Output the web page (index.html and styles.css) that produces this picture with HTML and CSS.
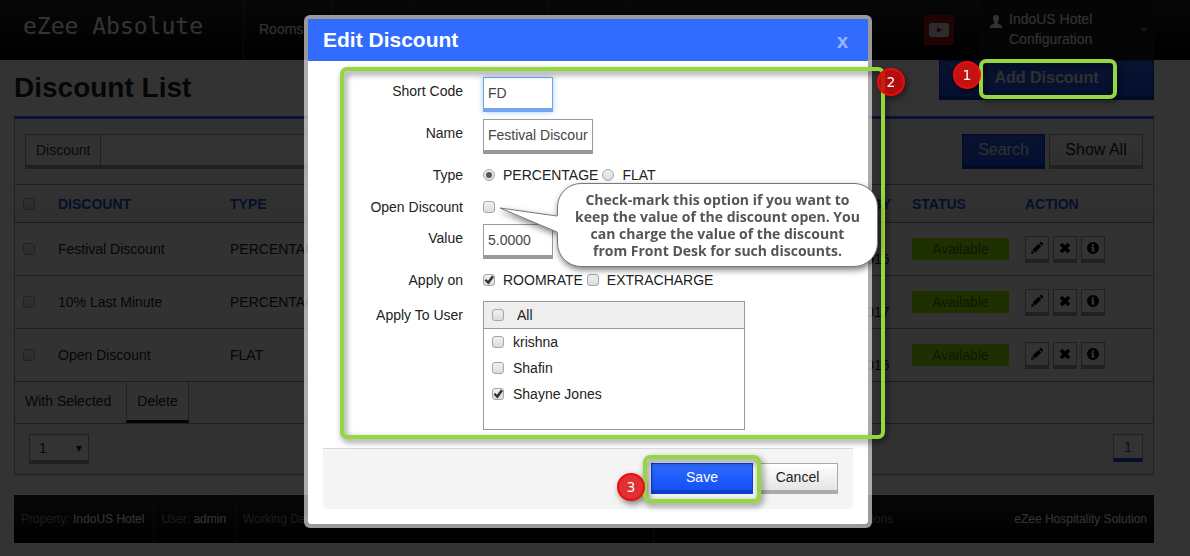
FILE: index.html
```html
<!DOCTYPE html>
<html lang="en">
<head>
<meta charset="utf-8">
<title>Discount List</title>
<link rel="stylesheet" href="styles.css">
</head>
<body>
<svg class="sprite" aria-hidden="true">
  <symbol id="pencil" viewBox="0 0 14 14"><path d="M10.2 1.1q.6-.6 1.2 0l1.500 1.500q.6.6 0 1.200l-1 1-2.700-2.700zM8.500 2.800l2.700 2.700-6 6-2.700-2.700zM1.900 9.600l2.500 2.500L1 13z"/></symbol>
  <symbol id="cross" viewBox="0 0 14 14"><path d="M4.300 1.700 7 4.400l2.700-2.700 2.600 2.600L9.600 7l2.700 2.700-2.600 2.600L7 9.600l-2.700 2.700-2.600-2.600L4.400 7 1.700 4.300z"/></symbol>
  <symbol id="info" viewBox="0 0 14 14"><path fill-rule="evenodd" d="M7 1a6 6 0 1 1 0 12A6 6 0 0 1 7 1zM6 3v1.700h2V3zM5 5.600v1.100h1V9.400H5v1.200h4.100V9.400H8V5.600z"/></symbol>
</svg>

<header class="topbar">
  <div class="logo">eZee Absolute</div>
  <nav class="menu">
    <a class="menu-rooms" href="#">Rooms</a>
    <span class="menu-a"></span><span class="menu-b"></span><span class="menu-a"></span><span class="menu-c"></span>
  </nav>
  <a class="video" href="#" aria-label="Videos">
    <svg width="20" height="14" viewBox="0 0 20 14"><rect width="20" height="14" rx="3" fill="#ddd"/><path d="M8 4l5 3-5 3z" fill="#a01818"/></svg>
  </a>
  <div class="account">
    <svg width="12" height="13" viewBox="0 0 12 13"><path d="M6 0c2 0 3 1.400 3 3.500C9 5 8.500 6 7.600 7v1.500L11 10q1 .5 1 3H0q0-2.500 1-3l3.400-1.500V7C3.500 6 3 5 3 3.500 3 1.400 4 0 6 0z" fill="#fff"/></svg>
    <span class="account-name">IndoUS Hotel Configuration</span>
    <i class="caret"></i>
  </div>
</header>

<main class="page">
  <div class="title-row">
    <h1>Discount List</h1>
    <button class="btn-add" type="button">Add Discount</button>
  </div>

  <section class="panel">
    <div class="search-row">
      <div class="search-group">
        <label for="q">Discount</label>
        <input id="q" type="text">
      </div>
      <button class="btn btn-blue" type="button">Search</button>
      <button class="btn" type="button">Show All</button>
    </div>

    <table class="list">
      <colgroup><col class="c-check"><col class="c-name"><col class="c-type"><col class="c-by"><col class="c-status"><col class="c-action"></colgroup>
      <thead>
        <tr><th><input type="checkbox" aria-label="Select all"></th><th>DISCOUNT</th><th>TYPE</th><th>ADDED BY</th><th>STATUS</th><th>ACTION</th></tr>
      </thead>
      <tbody>
        <tr>
          <td><input type="checkbox" aria-label="Select Festival Discount"></td><td>Festival Discount</td><td>PERCENTAGE</td><td>admin<br>22-08-2016</td>
          <td><span class="status">Available</span></td>
          <td><div class="actions"><button aria-label="Edit"><svg><use href="#pencil"/></svg></button><button aria-label="Remove"><svg><use href="#cross"/></svg></button><button aria-label="Info"><svg><use href="#info"/></svg></button></div></td>
        </tr>
        <tr>
          <td><input type="checkbox" aria-label="Select 10% Last Minute"></td><td>10% Last Minute</td><td>PERCENTAGE</td><td>admin<br>09-02-2017</td>
          <td><span class="status">Available</span></td>
          <td><div class="actions"><button aria-label="Edit"><svg><use href="#pencil"/></svg></button><button aria-label="Remove"><svg><use href="#cross"/></svg></button><button aria-label="Info"><svg><use href="#info"/></svg></button></div></td>
        </tr>
        <tr>
          <td><input type="checkbox" aria-label="Select Open Discount"></td><td>Open Discount</td><td>FLAT</td><td>admin<br>22-08-2016</td>
          <td><span class="status">Available</span></td>
          <td><div class="actions"><button aria-label="Edit"><svg><use href="#pencil"/></svg></button><button aria-label="Remove"><svg><use href="#cross"/></svg></button><button aria-label="Info"><svg><use href="#info"/></svg></button></div></td>
        </tr>
      </tbody>
    </table>

    <div class="bulk"><span>With Selected</span><button type="button">Delete</button></div>
    <div class="pager">
      <div class="select-box"><select aria-label="Rows"><option>1</option></select></div>
      <a href="#">1</a>
    </div>
  </section>

  <footer class="statusbar">
    <span>Property: <b>IndoUS Hotel</b></span>
    <span>User: <b>admin</b></span>
    <span class="grow">Working Date</span>
    <span class="options">Suggestions</span>
    <b class="vendor">eZee Hospitality Solution</b>
  </footer>
</main>

<div class="backdrop">
  <div class="modal" role="dialog" aria-labelledby="dlg">
    <div class="modal-head"><h2 id="dlg">Edit Discount</h2><button type="button" aria-label="Close">x</button></div>
    <form class="form">
      <div class="field"><label for="code">Short Code</label><input class="text focused" id="code" type="text" value="FD"></div>
      <div class="field"><label for="name">Name</label><input class="text wide" id="name" type="text" value="Festival Discount"></div>
      <div class="field field-type"><span class="label">Type</span>
        <div class="choices"><label><input type="radio" name="type" checked>PERCENTAGE</label><label><input type="radio" name="type">FLAT</label></div></div>
      <div class="field field-open"><label for="open">Open Discount</label><div class="choices open-choice"><input id="open" type="checkbox">
        <div class="callout">
          <svg class="tail" width="60" height="28" viewBox="0 0 60 28"><path d="M60 9 1 1l59 25z" fill="#fff"/><path d="M58 9 1 1l57 24" fill="none" stroke="#777"/></svg>
          Check-mark this option if you want to<br>keep the value of the discount open. You<br>can charge the value of the discount<br>from Front Desk for such discounts.
        </div></div></div>
      <div class="field"><label for="value">Value</label><input class="text" id="value" type="text" value="5.0000"></div>
      <div class="field"><span class="label">Apply on</span>
        <div class="choices"><label><input type="checkbox" checked>ROOMRATE</label><label><input type="checkbox">EXTRACHARGE</label></div></div>
      <div class="field"><span class="label">Apply To User</span>
        <div class="users">
          <label class="users-all"><input type="checkbox">All</label>
          <label><input type="checkbox">krishna</label>
          <label><input type="checkbox">Shafin</label>
          <label><input type="checkbox" checked>Shayne Jones</label>
        </div></div>
      <div class="mark mark-form"><span class="badge">2</span></div>
    </form>
    <div class="modal-foot">
      <div class="save-wrap"><button class="save" type="button">Save</button><div class="mark mark-save"><span class="badge">3</span></div></div>
      <button class="cancel" type="button">Cancel</button>
    </div>
  </div>
</div>
<div class="mark mark-add"><span class="badge">1</span></div>
</body>
</html>
```

FILE: styles.css
```css
* { box-sizing: border-box; }
body {
  margin: 0;
  min-height: 100vh;
  position: relative;
  overflow: hidden;
  background: #fff;
  color: #222;
  font: 14px/20px "Liberation Sans", Arial, sans-serif;
}
button, input, select { font: inherit; color: inherit; margin: 0; }
h1, h2 { margin: 0; }
a { color: inherit; text-decoration: none; }
.sprite { display: none; }

/* check boxes and radios */
input[type="checkbox"], input[type="radio"] {
  appearance: none;
  flex: none;
  display: block;
  width: 12px;
  height: 12px;
  border: 1px solid #a6a6a6;
  border-radius: 3px;
  background: linear-gradient(#f0f0f0, #dcdcdc);
}
input[type="radio"] { border-radius: 50%; }
input:checked::before { content: ""; display: block; width: 10px; height: 10px; background: #333; }
input[type="checkbox"]:checked::before { clip-path: polygon(5% 55%, 22% 40%, 40% 58%, 80% 5%, 100% 20%, 45% 95%); }
input[type="radio"]:checked::before { width: 6px; height: 6px; margin: 2px; border-radius: 50%; background: #555; }

/* top bar */
.topbar {
  display: flex;
  align-items: center;
  height: 60px;
  padding-right: 36px;
  background: linear-gradient(#262626, #000);
  color: #fff;
}
.logo {
  width: 243px;
  padding: 0 0 8px 23px;
  font: 23px/28px "DejaVu Sans Mono", monospace;
}
.menu { display: flex; align-self: stretch; flex: 1; }
.menu > * { border-left: 1px solid #383838; }
.menu-rooms { width: 89px; padding: 19px 15px; }
.menu-a { width: 81px; }
.menu-b { width: 135px; }
.menu-a + .menu-c { width: 95px; }
.video {
  display: grid;
  place-items: center;
  width: 30px;
  height: 30px;
  margin-right: 25px;
  background: #a01818;
}
.account {
  display: flex;
  align-self: stretch;
  width: 175px;
  padding: 9px 6px 0 11px;
  background: #1c1c1c;
}
.account svg { margin: 6px 7px 0 0; }
.account-name { width: 104px; }
.caret { margin: 19px 0 0 auto; width: 8px; height: 4px; background: #666; clip-path: polygon(0 0, 100% 0, 50% 100%); }

/* page */
.page { padding: 0 36px 13px 14px; }
.title-row { display: flex; justify-content: space-between; height: 56px; }
h1 { padding-top: 11px; font-size: 28px; line-height: 34px; }
.btn-add {
  width: 215px;
  height: 40px;
  padding: 0 0 2px;
  border: 1px solid #0838b8;
  border-bottom-width: 4px;
  background: linear-gradient(#2860f0, #1450e8);
  color: #eee;
  font-size: 16px;
  font-weight: bold;
}
.panel { border: 1px solid #a0a0a0; border-top: 3px solid #2a68f0; background: #f2f2f2; }
.search-row { display: flex; gap: 4px; padding: 15px 10px; }
.search-group {
  display: flex;
  width: 560px;
  height: 35px;
  margin-right: auto;
  border: 1px solid #a0a0a0;
  border-bottom-width: 4px;
  background: #fff;
}
.search-group label { padding: 5px 10px; border-right: 1px solid #a0a0a0; background: #f7f7f7; color: #333; }
.search-group input { flex: 1; border: 0; background: none; }
.btn {
  height: 35px;
  width: 94px;
  padding: 0;
  border: 1px solid #a0a0a0;
  border-bottom-width: 4px;
  background: linear-gradient(#fff, #e8e8e8);
  font-size: 16px;
}
.btn-blue { width: 83px; border-color: #0838b8; background: linear-gradient(#2860f0, #1450e8); color: #eee; }

.list { width: 100%; border-collapse: separate; border-spacing: 0; table-layout: fixed; }
.list th, .list td { padding: 0 0 0 8px; border-top: 1px solid #909090; text-align: left; background: #fafafa; }
.list th { height: 38px; color: #2050d0; background: linear-gradient(#fafafa, #ececec); }
.list td { height: 53px; }
.c-check { width: 35px; }
.c-name { width: 172px; }
.c-by { width: 94px; }
.c-status { width: 113px; }
.c-action { width: 136px; }
.status { display: block; width: 97px; padding: 1px 0; background: #94ee00; color: #4a7600; text-align: center; }
.actions { display: flex; gap: 4px; }
.actions button {
  display: grid;
  place-items: center;
  width: 24px;
  height: 27px;
  padding: 0;
  border: 1px solid #a0a0a0;
  border-bottom-width: 4px;
  background: #fff;
}
.actions svg { display: block; width: 14px; height: 14px; }

.bulk { display: flex; height: 42px; border-top: 1px solid #909090; }
.bulk span { width: 111px; padding: 9px 10px; }
.bulk button { width: 63px; padding: 0; border: 1px solid #a0a0a0; border-top: 0; border-bottom: 3px solid #111; background: #f7f7f7; }
.pager { display: flex; justify-content: space-between; padding: 10px 10px 10px 14px; border-top: 1px solid #909090; }
.select-box { position: relative; }
.select-box::after {
  content: "";
  position: absolute;
  right: 7px;
  top: 12px;
  width: 6px;
  height: 6px;
  background: #222;
  clip-path: polygon(0 0, 100% 0, 50% 100%);
}
.pager select {
  appearance: none;
  display: block;
  width: 60px;
  height: 30px;
  padding: 0 9px;
  border: 1px solid #a0a0a0;
  border-bottom-width: 4px;
  border-radius: 0;
  background: #fff;
}
.pager a {
  width: 30px;
  height: 28px;
  border: 1px solid #a0a0a0;
  border-bottom: 4px solid #1848c8;
  background: #fff;
  color: #2050d0;
  line-height: 24px;
  text-align: center;
}

.statusbar {
  display: flex;
  height: 48px;
  margin-top: 20px;
  background: linear-gradient(#262626, #000);
  color: #888;
  font-size: 12px;
  line-height: 48px;
}
.statusbar b { color: #fff; font-weight: normal; }
.statusbar span { padding: 0 9px 0 7px; border-right: 1px solid #333; }
.statusbar .grow { width: 418px; }
.statusbar .options { flex: 1; padding-left: 173px; border: 0; }
.statusbar .vendor { padding-right: 7px; }

/* dialog */
.backdrop {
  position: absolute;
  inset: 0;
  display: flex;
  justify-content: center;
  align-items: flex-start;
  padding: 15px 14px 0 0;
  background: rgba(0, 0, 0, .8);
}
.modal {
  width: 568px;
  border: 4px solid rgba(255, 255, 255, .6);
  border-radius: 6px;
  background: #fff;
  background-clip: padding-box;
}
.modal-head {
  display: flex;
  justify-content: space-between;
  height: 42px;
  padding: 0 20px 0 15px;
  background: #326cff;
  color: #fff;
  line-height: 42px;
}
.modal-head h2 { font-size: 21px; }
.modal-head button { padding: 2px 0 0; border: 0; background: none; color: #98b5ff; font: bold 20px/36px "Liberation Sans", Arial, sans-serif; }
.form { position: relative; display: flex; flex-direction: column; gap: 7px; padding: 16px 15px 18px; }
.field { display: grid; grid-template-columns: 140px 1fr; column-gap: 20px; min-height: 28px; }
.field-type { min-height: 25px; }
.field-open { min-height: 24px; }
.field > label, .label { padding-top: 4px; text-align: right; line-height: 20px; }
.text {
  width: 70px;
  height: 35px;
  padding: 0 4px;
  border: 1px solid #999;
  border-bottom-width: 4px;
  background: #fff;
  color: #444;
}
.wide { width: 110px; }
.focused { border-color: #72a5ee; box-shadow: 0 0 6px #a9c9fa; }
.choices { display: flex; align-items: flex-start; gap: 4px; padding-top: 4px; }
.choices label { display: flex; align-items: center; gap: 8px; }
.open-choice { position: relative; }
#open { margin-top: 4px; }

.users { width: 262px; height: 129px; border: 1px solid #999; }
.users label { display: flex; align-items: center; gap: 9px; height: 26px; padding-left: 8px; }
.users .users-all { gap: 13px; height: 27px; border-bottom: 1px solid #999; background: #eee; }

.modal-foot {
  display: flex;
  justify-content: flex-end;
  gap: 4px;
  height: 61px;
  margin: 0 15px 15px;
  padding: 14px 15px;
  border-top: 1px solid #d8d8d8;
  border-radius: 0 0 6px 6px;
  background: #f4f4f4;
}
.modal-foot button { height: 31px; padding: 0; border: 1px solid #aaa; border-bottom-width: 4px; background: linear-gradient(#fff, #e4e4e4); }
.modal-foot .save { width: 102px; border-color: #0a40c8; background: linear-gradient(#2f6bff, #1450f5); color: #fff; }
.modal-foot .cancel { width: 81px; }
.save-wrap { position: relative; }

/* annotations */
.mark { position: absolute; border: 4px solid #96d63f; border-radius: 7px; filter: drop-shadow(2px 3px 3px rgba(0, 0, 0, .5)); pointer-events: none; }
.mark-form { left: 32px; right: -17px; top: 6px; bottom: 9px; }
.mark-save { inset: -8px; }
.mark-add { top: 59px; right: 73px; width: 138px; height: 40px; }
.badge {
  position: absolute;
  width: 28px;
  height: 28px;
  border: 2px solid #f00a0a;
  border-radius: 50%;
  background: #c41212;
  color: #fff;
  font: 14px/24px "DejaVu Sans", sans-serif;
  text-align: center;
}
.mark-form .badge { right: -24px; top: -3px; background: rgba(200, 10, 10, .88); }
.mark-save .badge { left: -30px; bottom: -2px; background: #e03030; }
.mark-add .badge { left: -30px; top: -2px; }
.callout {
  position: absolute;
  z-index: 2;
  left: 74px;
  top: -10px;
  width: 321px;
  padding: 7px 10px;
  border: 1px solid #777;
  border-radius: 24px;
  background: #fff;
  color: #555;
  font: bold 14px/17px "Open Sans", sans-serif;
  text-align: center;
  white-space: nowrap;
  filter: drop-shadow(1px 3px 3px rgba(0, 0, 0, .5));
}
.tail { position: absolute; left: -59px; top: 23px; }
```
